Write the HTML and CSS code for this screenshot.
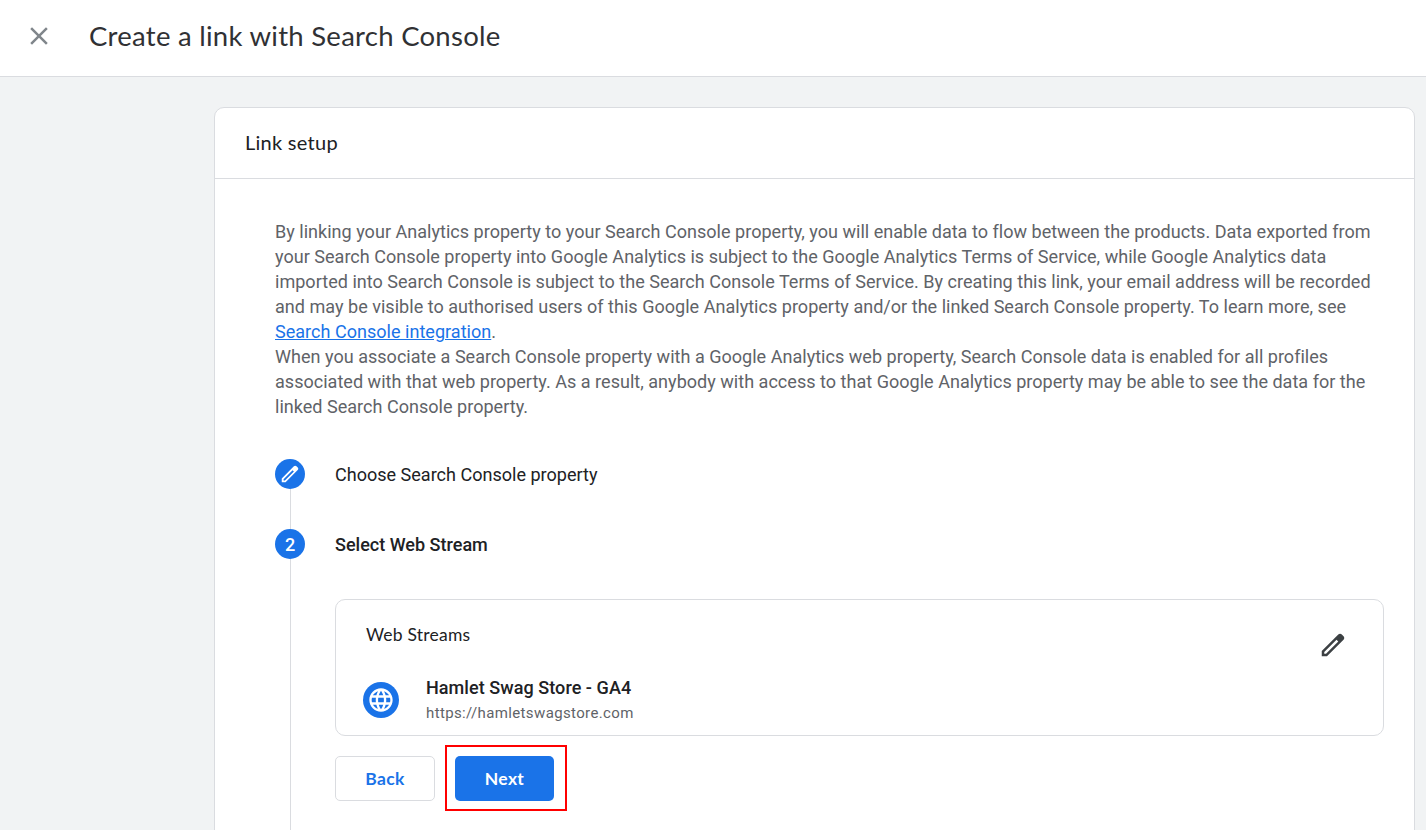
FILE: index.html
```html
<!DOCTYPE html>
<html lang="en">
<head>
<meta charset="utf-8">
<title>Create a link with Search Console</title>
<link rel="stylesheet" href="styles.css">
</head>
<body>
<header class="topbar">
  <svg class="close" viewBox="0 0 24 24"><path d="M19 6.41L17.59 5 12 10.59 6.41 5 5 6.41 10.59 12 5 17.59 6.41 19 12 13.41 17.59 19 19 17.59 13.41 12z"/></svg>
  <h1 class="title">Create a link with Search Console</h1>
</header>
<main class="page">
  <section class="card">
    <h2 class="card-title">Link setup</h2>
    <div class="card-body">
      <p class="intro">By linking your Analytics property to your Search Console property, you will enable data to flow between the products. Data exported from<br>your Search Console property into Google Analytics is subject to the Google Analytics Terms of Service, while Google Analytics data<br>imported into Search Console is subject to the Search Console Terms of Service. By creating this link, your email address will be recorded<br>and may be visible to authorised users of this Google Analytics property and/or the linked Search Console property. To learn more, see<br><a href="#">Search Console integration</a>.<br>When you associate a Search Console property with a Google Analytics web property, Search Console data is enabled for all profiles<br>associated with that web property. As a result, anybody with access to that Google Analytics property may be able to see the data for the<br>linked Search Console property.</p>
      <div class="step step-done">
        <div class="rail">
          <div class="badge"><svg class="badge-icon" viewBox="0 0 24 24"><path d="M20.41 4.94l-1.35-1.35c-.78-.78-2.05-.78-2.83 0L3 16.82V21h4.18L20.41 7.77c.79-.78.79-2.05 0-2.83zm-14 14.12L5 19v-1.36l9.82-9.82 1.41 1.41-9.82 9.83z"/></svg></div>
          <div class="line"></div>
        </div>
        <div class="step-label">Choose Search Console property</div>
      </div>
      <div class="step step-active">
        <div class="rail">
          <div class="badge">2</div>
          <div class="line"></div>
        </div>
        <div class="step-content">
          <div class="step-label active">Select Web Stream</div>
          <div class="streams">
            <div class="streams-main">
              <div class="streams-title">Web Streams</div>
              <div class="stream">
                <div class="globe"><svg viewBox="0 0 24 24"><path d="M11.99 2C6.47 2 2 6.48 2 12s4.47 10 9.99 10C17.52 22 22 17.52 22 12S17.52 2 11.99 2zm6.93 6h-2.95c-.32-1.25-.78-2.45-1.38-3.56 1.84.63 3.37 1.91 4.33 3.56zM12 4.04c.83 1.2 1.48 2.53 1.91 3.96h-3.82c.43-1.43 1.08-2.76 1.91-3.96zM4.26 14C4.1 13.36 4 12.69 4 12s.1-1.36.26-2h3.38c-.08.66-.14 1.32-.14 2s.06 1.34.14 2H4.26zm.82 2h2.95c.32 1.25.78 2.45 1.38 3.56-1.84-.63-3.37-1.9-4.33-3.56zm2.95-8H5.08c.96-1.66 2.49-2.93 4.33-3.56C8.81 5.55 8.35 6.75 8.03 8zM12 19.96c-.83-1.2-1.48-2.53-1.91-3.96h3.82c-.43 1.43-1.08 2.76-1.91 3.96zM14.34 14H9.66c-.09-.66-.16-1.32-.16-2s.07-1.35.16-2h4.68c.09.65.16 1.32.16 2s-.07 1.34-.16 2zm.25 5.56c.6-1.11 1.06-2.31 1.38-3.56h2.95c-.96 1.65-2.49 2.93-4.33 3.56zM16.36 14c.08-.66.14-1.32.14-2s-.06-1.34-.14-2h3.38c.16.64.26 1.31.26 2s-.1 1.36-.26 2h-3.38z"/></svg></div>
                <div class="stream-text">
                  <div class="stream-name">Hamlet Swag Store - GA4</div>
                  <div class="stream-url">https://hamletswagstore.com</div>
                </div>
              </div>
            </div>
            <svg class="edit" viewBox="0 0 24 24"><path d="M20.41 4.94l-1.35-1.35c-.78-.78-2.05-.78-2.83 0L3 16.82V21h4.18L20.41 7.77c.79-.78.79-2.05 0-2.83zm-14 14.12L5 19v-1.36l9.82-9.82 1.41 1.41-9.82 9.83z"/></svg>
          </div>
          <div class="actions">
            <button class="btn back">Back</button>
            <div class="highlight"><button class="btn next">Next</button></div>
          </div>
        </div>
      </div>
    </div>
  </section>
</main>
</body>
</html>
```

FILE: styles.css
```css
* { box-sizing: border-box; }
body {
  margin: 0;
  height: 830px;
  overflow: hidden;
  display: flex;
  flex-direction: column;
  background: #f1f3f4;
  color: #202124;
  font-family: Roboto, sans-serif;
  font-size: 18.05px;
}
.topbar {
  flex: none;
  height: 77px;
  display: flex;
  align-items: center;
  padding: 0 0 4px 24px;
  background: #fff;
  border-bottom: 1px solid #dadce0;
}
.close { width: 30px; height: 30px; fill: #80868b; }
.title {
  margin: 0 0 0 35px;
  font: 400 27.5px/36px Lato, sans-serif;
  letter-spacing: 0.27px;
  color: #303134;
}
.page { flex: 1; padding: 30px 11px 0 214px; }
.card {
  height: 740px;
  background: #fff;
  border: 1px solid #dadce0;
  border-radius: 10px;
}
.card-title {
  margin: 0;
  height: 71px;
  padding: 0 30px;
  border-bottom: 1px solid #dadce0;
  font: 400 20px/68px Lato, sans-serif;
  letter-spacing: 0.27px;
}
.card-body { padding: 40px 30px 0 60px; }
.intro {
  margin: 0;
  line-height: 25px;
  letter-spacing: 0.015px;
  color: #5f6368;
  white-space: nowrap;
}
.intro a { color: #1a73e8; }
.step { display: flex; gap: 30px; }
.step-done { margin-top: 40px; height: 70px; }
.step-active { height: 310px; }
.rail {
  width: 30px;
  display: flex;
  flex-direction: column;
  align-items: center;
}
.badge {
  flex: none;
  width: 30px;
  height: 30px;
  border-radius: 50%;
  background: #1a73e8;
  color: #fff;
  display: flex;
  align-items: center;
  justify-content: center;
  font-weight: 500;
}
.badge-icon { width: 22px; height: 22px; fill: #fff; }
.line { flex: 1; width: 1px; margin-left: 1px; background: #dadce0; }
.step-label { height: 30px; line-height: 32px; }
.active { font-weight: 500; }
.step-content { flex: 1; }
.streams {
  margin-top: 40px;
  height: 137px;
  display: flex;
  justify-content: space-between;
  padding: 20px 35px 0 27px;
  border: 1px solid #dadce0;
  border-radius: 10px;
}
.streams-title {
  padding-left: 3px;
  font: 400 17.5px/30px Lato, sans-serif;
  letter-spacing: 0.22px;
}
.stream { display: flex; align-items: center; gap: 27px; margin-top: 25px; }
.globe {
  width: 36px;
  height: 36px;
  border-radius: 50%;
  background: #1a73e8;
  display: flex;
  align-items: center;
  justify-content: center;
}
.globe svg { width: 28px; height: 28px; fill: #fff; }
.stream-name { font-weight: 500; line-height: 25px; letter-spacing: 0.05px; }
.stream-url {
  padding-top: 1px;
  font-size: 15px;
  line-height: 24px;
  letter-spacing: 0.37px;
  color: #5f6368;
}
.edit { width: 30px; height: 30px; margin-top: 10px; fill: #3c4043; }
.actions { display: flex; align-items: center; gap: 10px; margin-top: 9px; }
.btn {
  height: 45px;
  padding: 0;
  border-radius: 5px;
  font: 700 17.5px/20px Lato, sans-serif;
  letter-spacing: 0.3px;
}
.back { width: 100px; padding-top: 1px; background: #fff; border: 1px solid #dadce0; color: #1a73e8; }
.next { width: 99px; background: #1a73e8; border: 0; color: #fff; }
.highlight {
  width: 122px;
  height: 66px;
  padding: 9px 8px;
  border: 2px solid #f00;
}
```
